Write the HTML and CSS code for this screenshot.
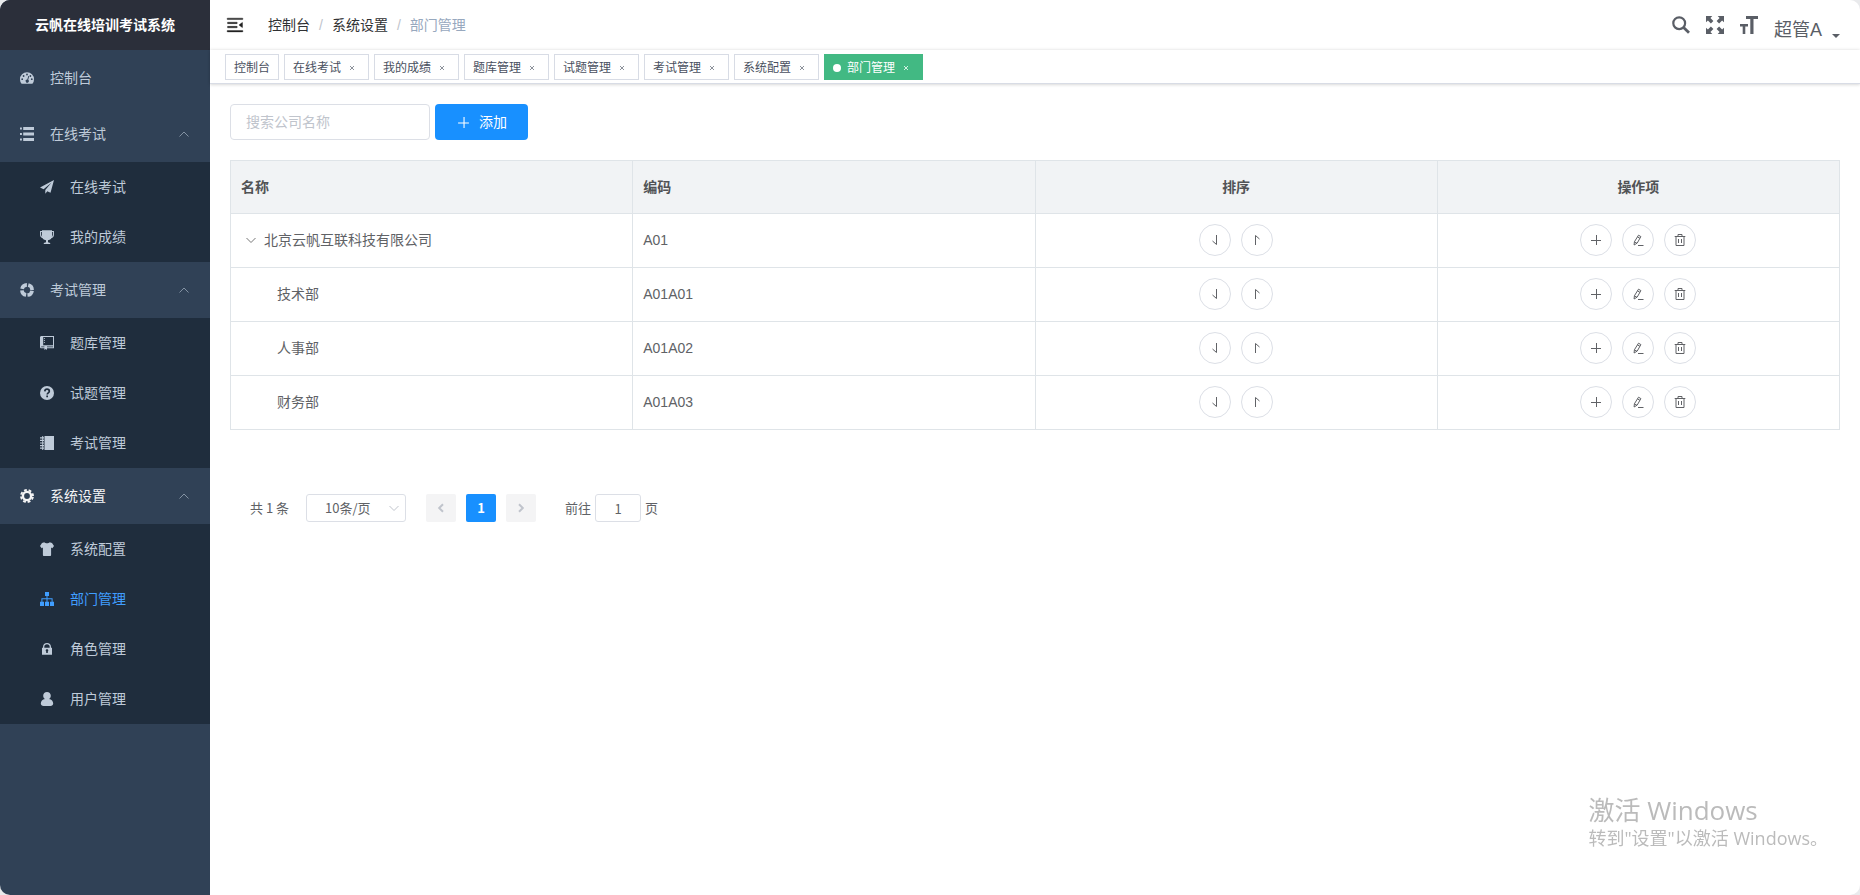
FILE: index.html
```html
<!DOCTYPE html>
<html lang="zh-CN">
<head>
<meta charset="utf-8">
<meta name="viewport" content="width=device-width, initial-scale=1">
<title>部门管理 - 云帆在线培训考试系统</title>
<link rel="stylesheet" href="styles.css">
</head>
<body>
<svg class="sprite" aria-hidden="true">
  <symbol id="i-dashboard" viewBox="0 0 14 14"><path fill-rule="evenodd" d="M7 1.200a7 7 0 0 0-7 7c0 1.600.4 3 1.100 4.100.2.300.5.500.8.500h10.200c.3 0 .6-.2.800-.5.700-1.200 1.100-2.500 1.100-4.100a7 7 0 0 0-7-7zM2.200 7.300a.9.9 0 1 1 0 1.800.9.9 0 0 1 0-1.800zM3.600 4.100a.9.9 0 1 1 0 1.800.9.9 0 0 1 0-1.800zM7 2.600a.9.9 0 1 1 0 1.800.9.9 0 0 1 0-1.800zM10.400 4.100a.9.9 0 1 1 0 1.800.9.9 0 0 1 0-1.800zM11.800 7.300a.9.9 0 1 1 0 1.800.9.9 0 0 1 0-1.800zM8.300 5l.9.300-1 3.500a1.600 1.600 0 1 1-.9-.300z"/></symbol>
  <symbol id="i-list" viewBox="0 0 14 14"><path d="M0 .6h1.900v1.800H0zM3.200 0H14v3H3.200zM0 6.100h1.900v1.800H0zM3.200 5.500H14v3H3.200zM0 11.600h1.900v1.800H0zM3.200 11H14v3H3.200z"/></symbol>
  <symbol id="i-plane" viewBox="0 0 14 14"><path d="M14 0L0 7.600l3.600 1.600L11.600 2.600 5.300 10v3.800l2-2.600 3.200 1.500z"/></symbol>
  <symbol id="i-trophy" viewBox="0 0 14 14"><path d="M2 .2h10V6c0 2.300-1.600 4-4 4.300v1.900l2.200.9v.9H3.800v-.9l2.200-.9v-1.900C3.600 10 2 8.300 2 6z"/><path d="M2.500 1.500H.6v3.200c0 1.600.8 2.500 2.400 2.900M11.500 1.500h1.900v3.200c0 1.600-.8 2.500-2.400 2.900" fill="none" stroke="currentColor" stroke-width="1.100"/></symbol>
  <symbol id="i-ring" viewBox="0 0 14 14"><circle cx="7" cy="7" r="5.100" fill="none" stroke="currentColor" stroke-width="3.600" stroke-dasharray="6.600 1.411" stroke-dashoffset="-.700"/></symbol>
  <symbol id="i-book" viewBox="0 0 14 14"><path fill-rule="evenodd" d="M1.500 0H14v12.300H7v1.700l-1.300-.9-1.300.9v-1.700H1.600C.6 12.300 0 11.600 0 10.700V1.500C0 .6.600 0 1.500 0zM3.200 1.100v8.200H13V1.100zM1.200 10.400v.9h3.200v-.9zm5.800 0v.9h6v-.9z"/><path d="M3.900 2h.9v1h-.9zm0 2h.9v1h-.9zm0 2h.9v1h-.9z"/></symbol>
  <symbol id="i-question" viewBox="0 0 14 14"><circle cx="7" cy="7" r="7"/><path d="M4.800 5.400C4.900 3.900 5.700 3.200 7 3.200s2.300.8 2.300 2c0 1.700-2.100 1.700-2.100 3.400" fill="none" stroke="#1f2d3d" stroke-width="1.700"/><path d="M6.300 9.600H8v1.600H6.300z" fill="#1f2d3d"/></symbol>
  <symbol id="i-notebook" viewBox="0 0 14 14"><path d="M4.500 0H14v14H4.500zM2.200 0h1v14h-1zM0 1.200h4v1.200H0zm0 2.600h4V5H0zm0 2.600h4v1.200H0zM0 9h4v1.200H0zm0 2.600h4v1.200H0z"/></symbol>
  <symbol id="i-gear" viewBox="0 0 14 14"><circle cx="7" cy="7" r="4.100" fill="none" stroke="currentColor" stroke-width="2.400"/><circle cx="7" cy="7" r="6" fill="none" stroke="currentColor" stroke-width="1.900" stroke-dasharray="2.800 1.912" stroke-dashoffset="-.956"/></symbol>
  <symbol id="i-shirt" viewBox="0 0 14 14"><path d="M4.300.2C5.500 1.700 8.500 1.700 9.700.2l2.300.8 2 3-1.700 2.300-1.200-.7v7.200c0 .8-.4 1.200-1.200 1.200H4.100c-.8 0-1.200-.4-1.200-1.200V5.600l-1.200.7L0 4l2-3z"/></symbol>
  <symbol id="i-tree" viewBox="0 0 14 14"><path d="M5 0h4v4H7.500v2.200h5.100v3.600H14V14h-4V9.800h1.600V7.200H7.500v2.600H9V14H5V9.800h1.500V7.200H2.400v2.600H4V14H0V9.800h1.400V6.200h5.100V4H5z"/></symbol>
  <symbol id="i-lock" viewBox="0 0 14 14"><path fill-rule="evenodd" d="M3 5.800V5c0-2.500 1.600-4 4-4s4 1.500 4 4v.8h1v7H2v-7zm1.300 0h5.400V5c0-1.700-1-2.700-2.700-2.700S4.300 3.300 4.300 5zM7 7.300c-.8 0-1.300.5-1.300 1.200 0 .4.200.7.500.9v1.500h1.600V9.400c.3-.2.500-.5.500-.9 0-.7-.5-1.200-1.300-1.200z"/></symbol>
  <symbol id="i-user" viewBox="0 0 14 14"><path d="M7 0c2.200 0 3.800 1.600 3.800 3.700 0 1.400-.7 2.700-1.800 3.400 2.600.4 4.200 2.200 4.200 4.500 0 1.600-1.200 2.400-2.700 2.400h-7C2 14 .8 13.200.8 11.600.8 9.300 2.400 7.500 5 7.100 3.900 6.400 3.200 5.100 3.200 3.700 3.200 1.600 4.800 0 7 0z"/></symbol>
  <symbol id="i-fold" viewBox="0 0 1024 1024"><path stroke="currentColor" stroke-width="20" transform="rotate(180 512 512)" d="M408 442h480c4.400 0 8-3.600 8-8v-56c0-4.400-3.600-8-8-8H408c-4.400 0-8 3.600-8 8v56c0 4.400 3.600 8 8 8zm-8 204c0 4.400 3.600 8 8 8h480c4.400 0 8-3.600 8-8v-56c0-4.400-3.600-8-8-8H408c-4.400 0-8 3.600-8 8v56zm504-486H120c-4.400 0-8 3.600-8 8v56c0 4.400 3.600 8 8 8h784c4.400 0 8-3.600 8-8v-56c0-4.400-3.600-8-8-8zm0 632H120c-4.400 0-8 3.600-8 8v56c0 4.400 3.600 8 8 8h784c4.400 0 8-3.600 8-8v-56c0-4.400-3.600-8-8-8zM142.400 642.100L298.700 519a8.840 8.840 0 0 0 0-13.900L142.400 381.900c-5.800-4.600-14.400-.5-14.400 6.900v246.300a8.900 8.900 0 0 0 14.400 7z"/></symbol>
  <symbol id="i-search" viewBox="0 0 18 18"><circle cx="7.200" cy="7.200" r="5.900" fill="none" stroke="currentColor" stroke-width="2.200"/><path d="M11.600 11.600l5.400 5.200" fill="none" stroke="currentColor" stroke-width="2.800"/></symbol>
  <symbol id="i-full" viewBox="0 0 18 18"><path d="M0 0h6.300L4.400 1.900l3 3-2.500 2.500-3-3L0 6.300z"/><path transform="rotate(90 9 9)" d="M0 0h6.300L4.400 1.900l3 3-2.500 2.500-3-3L0 6.300z"/><path transform="rotate(180 9 9)" d="M0 0h6.300L4.400 1.900l3 3-2.500 2.500-3-3L0 6.300z"/><path transform="rotate(270 9 9)" d="M0 0h6.300L4.400 1.900l3 3-2.500 2.500-3-3L0 6.300z"/></symbol>
  <symbol id="i-size" viewBox="0 0 18 18"><path d="M6 0h12v2.900h-4.500V18h-3.200V2.900H6zM0 8h8v2.500H5.300V18H2.700v-7.500H0z"/></symbol>
  <symbol id="i-up" viewBox="0 0 12 12"><path class="line" d="M1.500 8.500L6 4l4.500 4.500"/></symbol>
  <symbol id="i-down" viewBox="0 0 12 12"><path class="line" d="M1.500 4L6 8.500 10.500 4"/></symbol>
  <symbol id="i-left" viewBox="0 0 12 12"><path class="line bold" d="M8 2.200L4.200 6 8 9.800"/></symbol>
  <symbol id="i-right" viewBox="0 0 12 12"><path class="line bold" d="M4 2.200L7.800 6 4 9.800"/></symbol>
  <symbol id="i-plus" viewBox="0 0 12 12"><path class="line" d="M1 6.500h10M6.500 1v10"/></symbol>
  <symbol id="i-bottom" viewBox="0 0 12 12"><path class="line" d="M7.500 1v9.500L3.500 7"/></symbol>
  <symbol id="i-top" viewBox="0 0 12 12"><path class="line" d="M4.500 11V1.500l4 3.500"/></symbol>
  <symbol id="i-edit" viewBox="0 0 12 12"><path class="line" d="M6.500 1.200l2.400 1.400-3.700 6.500L2.100 11l.3-3.200zM5.500 2.900l2.400 1.400M2.500 7.900l2.500 1.400M6 11.500h5.500"/></symbol>
  <symbol id="i-trash" viewBox="0 0 12 12"><path class="line" d="M.7 2.500h10.600M2 2.500v9h8v-9M4 2.500v-2h4v2M4.500 5v4M7.500 5v4"/></symbol>
  <symbol id="i-close" viewBox="0 0 8 8"><path class="line" d="M2 2l4 4M6 2L2 6"/></symbol>
</svg>

<div class="app">
  <aside class="sidebar">
    <h1 class="brand">云帆在线培训考试系统</h1>
    <nav>
      <a class="item" href="#"><svg class="icon"><use href="#i-dashboard"/></svg>控制台</a>
      <button class="item" type="button" aria-expanded="true"><svg class="icon"><use href="#i-list"/></svg>在线考试<svg class="arrow"><use href="#i-up"/></svg></button>
      <div class="sub">
        <a href="#"><svg class="icon"><use href="#i-plane"/></svg>在线考试</a>
        <a href="#"><svg class="icon"><use href="#i-trophy"/></svg>我的成绩</a>
      </div>
      <button class="item" type="button" aria-expanded="true"><svg class="icon"><use href="#i-ring"/></svg>考试管理<svg class="arrow"><use href="#i-up"/></svg></button>
      <div class="sub">
        <a href="#"><svg class="icon"><use href="#i-book"/></svg>题库管理</a>
        <a href="#"><svg class="icon"><use href="#i-question"/></svg>试题管理</a>
        <a href="#"><svg class="icon"><use href="#i-notebook"/></svg>考试管理</a>
      </div>
      <button class="item current" type="button" aria-expanded="true"><svg class="icon"><use href="#i-gear"/></svg>系统设置<svg class="arrow"><use href="#i-up"/></svg></button>
      <div class="sub">
        <a href="#"><svg class="icon"><use href="#i-shirt"/></svg>系统配置</a>
        <a class="active" href="#" aria-current="page"><svg class="icon"><use href="#i-tree"/></svg>部门管理</a>
        <a href="#"><svg class="icon"><use href="#i-lock"/></svg>角色管理</a>
        <a href="#"><svg class="icon"><use href="#i-user"/></svg>用户管理</a>
      </div>
    </nav>
  </aside>

  <div class="page">
    <header class="navbar">
      <button class="fold" type="button" aria-label="收起菜单"><svg><use href="#i-fold"/></svg></button>
      <nav class="crumbs"><a href="#">控制台</a><span class="sep">/</span><a href="#">系统设置</a><span class="sep">/</span><span class="here">部门管理</span></nav>
      <div class="tools">
        <button type="button" aria-label="搜索"><svg><use href="#i-search"/></svg></button>
        <button type="button" aria-label="全屏"><svg><use href="#i-full"/></svg></button>
        <button type="button" aria-label="字号"><svg><use href="#i-size"/></svg></button>
        <button class="account" type="button">超管A<span class="caret"></span></button>
      </div>
    </header>

    <nav class="tags">
      <a class="tag" href="#">控制台</a>
      <a class="tag" href="#">在线考试<svg><use href="#i-close"/></svg></a>
      <a class="tag" href="#">我的成绩<svg><use href="#i-close"/></svg></a>
      <a class="tag" href="#">题库管理<svg><use href="#i-close"/></svg></a>
      <a class="tag" href="#">试题管理<svg><use href="#i-close"/></svg></a>
      <a class="tag" href="#">考试管理<svg><use href="#i-close"/></svg></a>
      <a class="tag" href="#">系统配置<svg><use href="#i-close"/></svg></a>
      <a class="tag on" href="#"><span class="dot"></span>部门管理<svg><use href="#i-close"/></svg></a>
    </nav>

    <main class="content">
      <div class="filters">
        <input type="text" placeholder="搜索公司名称" aria-label="搜索公司名称">
        <button class="primary" type="button"><svg><use href="#i-plus"/></svg>添加</button>
      </div>

      <table class="grid">
        <thead><tr><th>名称</th><th>编码</th><th class="mid">排序</th><th class="mid">操作项</th></tr></thead>
        <tbody>
          <tr>
            <td><div class="root"><button class="toggle" type="button" aria-label="折叠"><svg><use href="#i-down"/></svg></button>北京云帆互联科技有限公司</div></td><td>A01</td>
            <td><div class="ops"><button type="button" aria-label="下移"><svg><use href="#i-bottom"/></svg></button><button type="button" aria-label="上移"><svg><use href="#i-top"/></svg></button></div></td>
            <td><div class="ops"><button type="button" aria-label="添加"><svg><use href="#i-plus"/></svg></button><button type="button" aria-label="编辑"><svg><use href="#i-edit"/></svg></button><button type="button" aria-label="删除"><svg><use href="#i-trash"/></svg></button></div></td>
          </tr>
          <tr>
            <td><div class="child">技术部</div></td><td>A01A01</td>
            <td><div class="ops"><button type="button" aria-label="下移"><svg><use href="#i-bottom"/></svg></button><button type="button" aria-label="上移"><svg><use href="#i-top"/></svg></button></div></td>
            <td><div class="ops"><button type="button" aria-label="添加"><svg><use href="#i-plus"/></svg></button><button type="button" aria-label="编辑"><svg><use href="#i-edit"/></svg></button><button type="button" aria-label="删除"><svg><use href="#i-trash"/></svg></button></div></td>
          </tr>
          <tr>
            <td><div class="child">人事部</div></td><td>A01A02</td>
            <td><div class="ops"><button type="button" aria-label="下移"><svg><use href="#i-bottom"/></svg></button><button type="button" aria-label="上移"><svg><use href="#i-top"/></svg></button></div></td>
            <td><div class="ops"><button type="button" aria-label="添加"><svg><use href="#i-plus"/></svg></button><button type="button" aria-label="编辑"><svg><use href="#i-edit"/></svg></button><button type="button" aria-label="删除"><svg><use href="#i-trash"/></svg></button></div></td>
          </tr>
          <tr>
            <td><div class="child">财务部</div></td><td>A01A03</td>
            <td><div class="ops"><button type="button" aria-label="下移"><svg><use href="#i-bottom"/></svg></button><button type="button" aria-label="上移"><svg><use href="#i-top"/></svg></button></div></td>
            <td><div class="ops"><button type="button" aria-label="添加"><svg><use href="#i-plus"/></svg></button><button type="button" aria-label="编辑"><svg><use href="#i-edit"/></svg></button><button type="button" aria-label="删除"><svg><use href="#i-trash"/></svg></button></div></td>
          </tr>
        </tbody>
      </table>

      <div class="pager">
        <span>共 1 条</span>
        <div class="size">
          <select aria-label="每页条数"><option>10条/页</option></select>
          <svg><use href="#i-down"/></svg>
        </div>
        <div class="pages">
          <button type="button" disabled aria-label="上一页"><svg><use href="#i-left"/></svg></button>
          <button class="num" type="button">1</button>
          <button type="button" disabled aria-label="下一页"><svg><use href="#i-right"/></svg></button>
        </div>
        <label class="jump">前往<input type="text" value="1">页</label>
      </div>
    </main>
  </div>
</div>

<div class="activate"><p class="big">激活 Windows</p><p>转到"设置"以激活 Windows。</p></div>
</body>
</html>
```
FILE: styles.css
```css
* { box-sizing: border-box; }

body {
  margin: 0;
  background: #e9eaec;
  color: #606266;
  font: 14px/20px "Liberation Sans", "Noto Sans CJK SC", sans-serif;
}

a { color: inherit; text-decoration: none; }
button, input, select { font: inherit; color: inherit; }
button { border: 0; padding: 0; background: none; cursor: pointer; }
svg { fill: currentColor; flex: none; }
.line { fill: none; stroke: currentColor; stroke-width: 1; }
.line.bold { stroke-width: 2; }
.sprite { position: absolute; width: 0; height: 0; }

.app {
  display: flex;
  min-height: 100vh;
  background: #fff;
  border-radius: 10px;
  overflow: hidden;
}

/* sidebar */
.sidebar { width: 210px; flex: none; background: #304156; color: #bfcbd9; }
.brand {
  margin: 0;
  background: #2b2f3a;
  color: #fff;
  font-size: 14px;
  line-height: 50px;
  text-align: center;
}
.item, .sub a { display: flex; align-items: center; width: 100%; text-align: left; }
.item { height: 56px; padding: 0 20px; }
.item.current { color: #f4f4f5; }
.sub { background: #1f2d3d; }
.sub a { height: 50px; padding: 0 40px; }
.sub .active { color: #409eff; }
.icon { width: 14px; height: 14px; margin-right: 16px; }
.arrow { width: 12px; height: 12px; margin-left: auto; color: #8392a3; }

/* top bar */
.page { flex: 1; min-width: 0; }
.navbar { display: flex; align-items: center; height: 50px; padding-right: 20px; }
.fold { width: 50px; height: 50px; margin-right: 8px; padding-left: 15px; color: #222; }
.fold svg { display: block; width: 20px; height: 20px; }
.crumbs { color: #303133; }
.crumbs .sep { margin: 0 9px; color: #c0c4cc; }
.crumbs .here { color: #97a8be; }
.tools { display: flex; align-items: center; gap: 16px; margin-left: auto; color: #5a5e66; }
.tools svg { display: block; width: 18px; height: 18px; }
.account { display: flex; align-items: flex-end; padding-top: 10px; font-size: 18px; line-height: 24px; }
.caret { margin: 0 0 4px 10px; border: 4px solid transparent; border-bottom: 0; border-top-color: currentColor; }

/* opened views */
.tags {
  display: flex;
  gap: 5px;
  height: 34px;
  padding: 4px 15px;
  border-bottom: 1px solid #d8dce5;
  box-shadow: 0 -1px 3px rgba(0, 0, 0, .06), 0 1px 3px rgba(0, 0, 0, .14);
}
.tag {
  display: flex;
  align-items: center;
  height: 26px;
  padding: 1px 8px 0;
  border: 1px solid #d8dce5;
  color: #495060;
  font-size: 12px;
}
.tag svg { width: 8px; height: 8px; margin: 1px 4px 0 7px; color: #8d929b; }
.tag.on { border-color: #42b983; background: #42b983; color: #fff; }
.tag.on svg { color: #d5f0e3; }
.dot { width: 8px; height: 8px; margin-right: 6px; border-radius: 50%; background: #fff; }

/* content */
.content { padding: 20px; }
.filters { display: flex; gap: 5px; margin-bottom: 20px; }
.filters input { width: 200px; height: 36px; padding: 0 15px; border: 1px solid #dcdfe6; border-radius: 4px; }
input::placeholder { color: #c0c4cc; }
.primary {
  display: flex;
  align-items: center;
  gap: 9px;
  height: 36px;
  padding: 0 21px 0 22px;
  border-radius: 4px;
  background: #1890ff;
  color: #fff;
}
.primary svg { width: 13px; height: 13px; }

.grid { width: 100%; table-layout: fixed; border-collapse: collapse; }
.grid th, .grid td { height: 54px; padding: 0 10px; border: 1px solid #dfe4e8; text-align: left; }
.grid td { padding-bottom: 2px; }
.grid th { height: 53px; background: #f1f3f5; color: #515356; }
.grid th.mid { text-align: center; }
.root { display: flex; align-items: center; }
.toggle { width: 20px; height: 20px; margin-right: 3px; color: #777; }
.toggle svg { display: block; width: 12px; height: 12px; margin: 0 auto; }
.child { padding-left: 36px; }
.ops { display: flex; justify-content: center; gap: 10px; }
.ops button { display: grid; place-items: center; width: 32px; height: 32px; border: 1px solid #dcdfe6; border-radius: 50%; }
.ops svg { width: 12px; height: 12px; }

/* pagination */
.pager { display: flex; align-items: center; margin-top: 64px; padding-left: 20px; font-family: "Noto Sans CJK SC", sans-serif; font-size: 13px; }
.size { display: grid; align-items: center; margin: 0 20px 0 17px; }
.size select, .size svg { grid-area: 1 / 1; }
.size select { width: 100px; height: 28px; padding: 0 18px; border: 1px solid #dcdfe6; border-radius: 3px; background: #fff; appearance: none; }
.size svg { justify-self: end; width: 12px; height: 12px; margin-right: 6px; color: #c0c4cc; pointer-events: none; }
.pages { display: flex; gap: 10px; margin-right: 29px; }
.pages button { display: grid; place-items: center; width: 30px; height: 28px; border-radius: 2px; background: #f4f4f5; color: #c0c4cc; }
.pages svg { width: 12px; height: 12px; }
.pages .num { background: #1890ff; color: #fff; font-weight: 700; }
.jump { display: flex; align-items: center; gap: 4px; }
.jump input { width: 46px; height: 28px; padding: 0; border: 1px solid #dcdfe6; border-radius: 3px; text-align: center; }

/* system notice over the page */
.activate {
  position: fixed;
  right: 32px;
  bottom: 44px;
  color: #bbb;
  font: 18px/26px "Open Sans", "Noto Sans CJK SC", sans-serif;
  pointer-events: none;
}
.activate p { margin: 0; }
.activate .big { font-size: 26px; line-height: 30px; }
```
